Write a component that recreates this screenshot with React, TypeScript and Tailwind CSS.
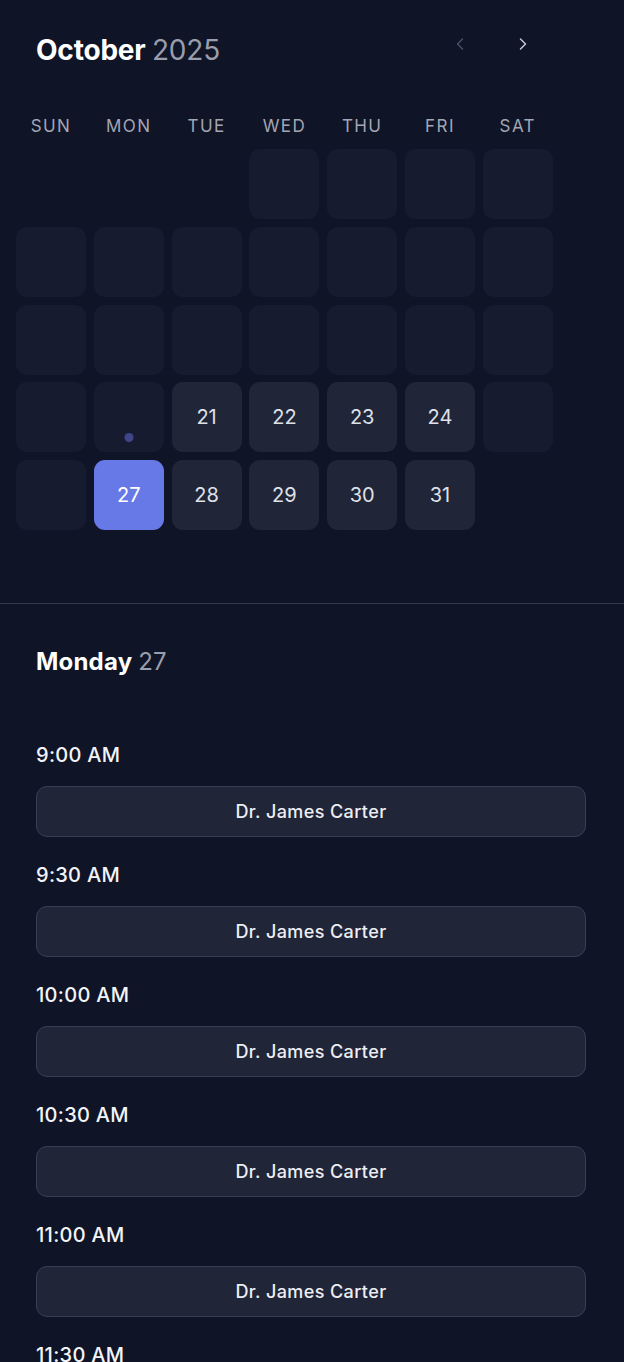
import { ChevronLeft, ChevronRight } from "lucide-react";

const weekdays = ["SUN", "MON", "TUE", "WED", "THU", "FRI", "SAT"];

// October 2025 starts on a Wednesday
type Cell = { day?: number; kind: "none" | "past" | "open" | "selected"; dot?: boolean };

function buildCells(): Cell[] {
  const cells: Cell[] = [];
  for (let i = 0; i < 3; i++) cells.push({ kind: "none" });
  for (let d = 1; d <= 31; d++) {
    const dow = (d + 2) % 7;
    if (d === 27) cells.push({ day: d, kind: "selected" });
    else if (d < 21 || dow === 0 || dow === 6) cells.push({ day: d, kind: "past", dot: d === 20 });
    else cells.push({ day: d, kind: "open" });
  }
  return cells;
}

const slots = ["9:00 AM", "9:30 AM", "10:00 AM", "10:30 AM", "11:00 AM", "11:30 AM"];

export default function App() {
  const cells = buildCells();
  return (
    <div
      className="h-[1362px] bg-[#0f1427] text-white overflow-hidden"
      style={{ fontFamily: "Inter, 'Noto Sans', sans-serif" }}
    >
      <section className="pb-[73px]">
        <div className="flex items-start pl-[36px] pr-[85px] pt-[32px]">
          <h1 className="text-[28px] leading-[36px] font-bold tracking-[-0.2px]">
            October <span className="font-normal text-[#9a9dab]">2025</span>
          </h1>
          <div className="ml-auto flex gap-[31px] -mt-[4px]">
            <button className="w-8 h-8 flex items-center justify-center text-[#4a4f63]">
              <ChevronLeft size={20} strokeWidth={1.8} />
            </button>
            <button className="w-8 h-8 flex items-center justify-center text-[#c4c7d2]">
              <ChevronRight size={20} strokeWidth={1.8} />
            </button>
          </div>
        </div>

        <div className="px-[16px] mt-[48px] w-[570px]">
          <div className="grid grid-cols-[repeat(7,70px)] gap-x-[7.8px]">
            {weekdays.map((w) => (
              <div key={w} className="text-center text-[17px] leading-[20px] font-normal tracking-[1.4px] text-[#a3a6b3]">
                {w}
              </div>
            ))}
          </div>
          <div className="mt-[13px] grid grid-cols-[repeat(7,70px)] gap-[7.8px]">
            {cells.map((c, i) => {
              if (c.kind === "none") return <div key={i} className="h-[70px]" />;
              if (c.kind === "past")
                return (
                  <div key={i} className="relative h-[70px] rounded-[11px] bg-[#171b2f]">
                    {c.dot && (
                      <span className="absolute left-1/2 bottom-[10px] -translate-x-1/2 w-[9px] h-[9px] rounded-full bg-[#3e4689]" />
                    )}
                  </div>
                );
              if (c.kind === "selected")
                return (
                  <button
                    key={i}
                    className="h-[70px] rounded-[11px] bg-[#6779e7] text-[20px] font-normal text-white flex items-center justify-center"
                  >
                    {c.day}
                  </button>
                );
              return (
                <button
                  key={i}
                  className="h-[70px] rounded-[11px] bg-[#212538] text-[20px] font-normal text-[#dfe1e8] flex items-center justify-center"
                >
                  {c.day}
                </button>
              );
            })}
          </div>
        </div>
      </section>

      <div className="h-px bg-[#363a4d]" />

      <section className="px-[36px] pt-[43px]">
        <h2 className="text-[24px] leading-[30px] font-bold tracking-[0.2px]">
          Monday <span className="font-normal text-[#9a9dab]">27</span>
        </h2>
        <div className="mt-[66px] w-[550px] flex flex-col">
          {slots.map((s) => (
            <div key={s} className="flex flex-col h-[120px] shrink-0">
              <div className="text-[20px] leading-[24px] font-medium tracking-[0.3px] text-[#f3f4f7]">{s}</div>
              <button className="mt-[19px] h-[51px] w-full rounded-[11px] border border-[#3a3e54] bg-[#212538] text-[18px] font-medium tracking-[0.4px] text-[#eceef3]">
                Dr. James Carter
              </button>
            </div>
          ))}
        </div>
      </section>
    </div>
  );
}
